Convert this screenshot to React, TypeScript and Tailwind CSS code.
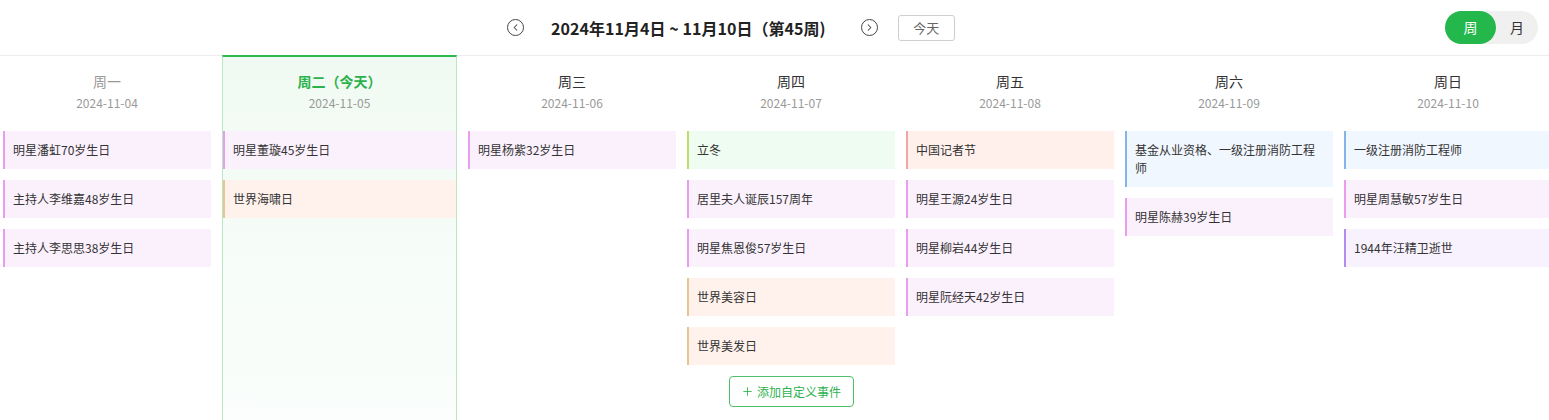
import { ChevronLeft, ChevronRight, Plus } from 'lucide-react';

type Kind = 'birthday' | 'world' | 'term' | 'press' | 'exam' | 'death';

const kindStyle: Record<Kind, string> = {
  birthday: 'bg-[#fbf1fd] border-[#e89ded]',
  world: 'bg-[#fff2ed] border-[#e8c48f]',
  term: 'bg-[#effcf1] border-[#c2dc6a]',
  press: 'bg-[#fff0ec] border-[#f2a6a6]',
  exam: 'bg-[#f1f7ff] border-[#83b5e6]',
  death: 'bg-[#f7f2fd] border-[#b38cef]',
};

const days: { name: string; date: string; past?: boolean; today?: boolean; events: [string, Kind][]; add?: boolean }[] = [
  { name: '周一', date: '2024-11-04', past: true, events: [['明星潘虹70岁生日', 'birthday'], ['主持人李维嘉48岁生日', 'birthday'], ['主持人李思思38岁生日', 'birthday']] },
  { name: '周二（今天）', date: '2024-11-05', today: true, events: [['明星董璇45岁生日', 'birthday'], ['世界海啸日', 'world']] },
  { name: '周三', date: '2024-11-06', events: [['明星杨紫32岁生日', 'birthday']] },
  {
    name: '周四', date: '2024-11-07', add: true,
    events: [['立冬', 'term'], ['居里夫人诞辰157周年', 'birthday'], ['明星焦恩俊57岁生日', 'birthday'], ['世界美容日', 'world'], ['世界美发日', 'world']],
  },
  { name: '周五', date: '2024-11-08', events: [['中国记者节', 'press'], ['明星王源24岁生日', 'birthday'], ['明星柳岩44岁生日', 'birthday'], ['明星阮经天42岁生日', 'birthday']] },
  { name: '周六', date: '2024-11-09', events: [['基金从业资格、一级注册消防工程师', 'exam'], ['明星陈赫39岁生日', 'birthday']] },
  { name: '周日', date: '2024-11-10', events: [['一级注册消防工程师', 'exam'], ['明星周慧敏57岁生日', 'birthday'], ['1944年汪精卫逝世', 'death']] },
];

function CircleArrow({ dir }: { dir: 'left' | 'right' }) {
  const Icon = dir === 'left' ? ChevronLeft : ChevronRight;
  return (
    <button className="w-[17px] h-[17px] rounded-full border-[1.5px] border-[#444] flex items-center justify-center text-[#444]">
      <Icon size={11} strokeWidth={2.2} />
    </button>
  );
}

export default function App() {
  return (
    <div className="w-[1549px] h-[420px] overflow-hidden bg-white text-[#333]" style={{ fontFamily: '"Noto Sans CJK SC", "Noto Sans", sans-serif' }}>
      <div className="h-[56px] flex items-center border-b border-[#ececec]">
        <div className="w-[507px] shrink-0" />
        <CircleArrow dir="left" />
        <h1 className="ml-[27px] mr-[35px] text-[16px] font-bold text-[#222] tracking-[0.05px]">2024年11月4日 ~ 11月10日（第45周)</h1>
        <CircleArrow dir="right" />
        <button className="ml-[20px] w-[57px] h-[26px] border border-[#cfcfcf] rounded-[3px] text-[13px] text-[#666]">今天</button>
        <div className="flex-1 flex justify-end pr-[11px]">
          <div className="flex items-center h-[33px] w-[93px] rounded-full bg-[#f0f0f0]">
            <span className="w-[51px] h-[33px] rounded-full bg-[#24b84c] text-white text-[14px] flex items-center justify-center">周</span>
            <span className="flex-1 text-center text-[14px] text-[#333]">月</span>
          </div>
        </div>
      </div>

      <div className="flex gap-[11px] pl-[3px] h-[364px]">
        {days.map(day => (
          <div
            key={day.date}
            className={
              day.today
                ? 'w-[235px] shrink-0 border-x border-[#b9e6c4] border-t-2 border-t-[#2cb94f] bg-gradient-to-b from-[#f0faf2] to-[#fbfefc] -mt-[1px]'
                : 'w-[208px] shrink-0'
            }
          >
            <div className={day.today ? 'pt-[14px] text-center' : 'pt-[15px] text-center'}>
              <div className={
                day.today
                  ? 'text-[14px] leading-[20px] font-bold text-[#2bb24c]'
                  : day.past
                    ? 'text-[14px] leading-[20px] text-[#999]'
                    : 'text-[14px] leading-[20px] text-[#333]'
              }>{day.name}</div>
              <div className="mt-[3px] text-[12px] leading-[18px] text-[#999]">{day.date}</div>
            </div>
            <div className="mt-[19px] flex flex-col gap-[11px]">
              {day.events.map(([title, kind]) => (
                <div key={title} className={`border-l-2 px-[8px] py-[10px] text-[12px] leading-[18px] text-[#333] ${kindStyle[kind]}`}>
                  {title}
                </div>
              ))}
              {day.add && (
                <div className="flex justify-center">
                  <button className="w-[125px] h-[31px] border border-[#4fbf6a] rounded-[4px] text-[12px] text-[#2bb24c] flex items-center justify-center gap-[3px]">
                    <Plus size={13} strokeWidth={1.6} />
                    添加自定义事件
                  </button>
                </div>
              )}
            </div>
          </div>
        ))}
      </div>
    </div>
  );
}
